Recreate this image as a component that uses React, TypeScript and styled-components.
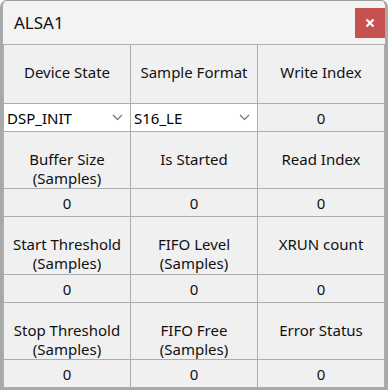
import React from "react";
import styled, { createGlobalStyle } from "styled-components";

const Global = createGlobalStyle`
  html, body { margin: 0; padding: 0; background: #ffffff; }
  body { font-family: "Noto Sans", "Liberation Sans", sans-serif; }
  * { box-sizing: border-box; }
`;

const Window = styled.div`
  width: 388px;
  height: 390px;
  background: #f0f0f0;
  border-top: 1px solid #9a9a9a;
  border-left: 3px solid #a9a9a9;
  border-right: 3px solid #a9a9a9;
  border-bottom: 2px solid #a9a9a9;
  border-radius: 7px 7px 0 0;
  display: flex;
  flex-direction: column;
  overflow: hidden;
`;

const TitleBar = styled.div`
  height: 43px;
  background: #f3f3f3;
  display: flex;
  align-items: center;
  justify-content: space-between;
  padding: 0 0 0 11px;
`;

const Title = styled.span`
  font-size: 17px;
  color: #111;
  padding-bottom: 1px;
`;

const CloseButton = styled.div`
  width: 30px;
  height: 30px;
  margin-top: 1px;
  background: #c75050;
  display: flex;
  align-items: center;
  justify-content: center;
`;

const Grid = styled.div`
  display: grid;
  grid-template-columns: 126px 126px 126px;
  grid-template-rows: 58px 27px 56px 27px 57px 27px 56px 27px;
  gap: 1px;
  padding: 1px;
  background: #adadad;
`;

const LabelCell = styled.div`
  background: #f0f0f0;
  display: flex;
  flex-direction: column;
  align-items: center;
  padding-top: 18px;
  font-size: 15px;
  line-height: 19px;
  color: #101010;
  text-align: center;
`;

const ValueCell = styled.div`
  background: #f0f0f0;
  display: flex;
  align-items: center;
  justify-content: center;
  font-size: 15px;
  color: #101010;
`;

const Combo = styled.div`
  background: #ffffff;
  display: flex;
  align-items: center;
  justify-content: space-between;
  padding: 0 7px 0 3px;
  font-size: 15px;
  color: #000;
`;

const Chevron = () => (
  <svg width="11" height="7" viewBox="0 0 11 7">
    <path d="M1 1 L5.5 5.5 L10 1" fill="none" stroke="#707070" strokeWidth="1.1" />
  </svg>
);

const CloseIcon = () => (
  <svg width="10" height="10" viewBox="0 0 10 10">
    <path d="M1.5 1.5 L8.5 8.5 M8.5 1.5 L1.5 8.5" stroke="#ffffff" strokeWidth="2.2" />
  </svg>
);

type Row = { labels: string[][]; values: (string | { combo: string })[] };

const rows: Row[] = [
  {
    labels: [["Device State"], ["Sample Format"], ["Write Index"]],
    values: [{ combo: "DSP_INIT" }, { combo: "S16_LE" }, "0"],
  },
  {
    labels: [["Buffer Size", "(Samples)"], ["Is Started"], ["Read Index"]],
    values: ["0", "0", "0"],
  },
  {
    labels: [["Start Threshold", "(Samples)"], ["FIFO Level", "(Samples)"], ["XRUN count"]],
    values: ["0", "0", "0"],
  },
  {
    labels: [["Stop Threshold", "(Samples)"], ["FIFO Free", "(Samples)"], ["Error Status"]],
    values: ["0", "0", "0"],
  },
];

export default function App() {
  return (
    <>
      <Global />
      <Window>
        <TitleBar>
          <Title>ALSA1</Title>
          <CloseButton>
            <CloseIcon />
          </CloseButton>
        </TitleBar>
        <Grid>
          {rows.map((row, ri) => (
            <React.Fragment key={ri}>
              {row.labels.map((lines, ci) => (
                <LabelCell key={"l" + ci}>
                  {lines.map((t, li) => (
                    <span key={li}>{t}</span>
                  ))}
                </LabelCell>
              ))}
              {row.values.map((v, ci) =>
                typeof v === "string" ? (
                  <ValueCell key={"v" + ci}>{v}</ValueCell>
                ) : (
                  <Combo key={"v" + ci}>
                    <span>{v.combo}</span>
                    <Chevron />
                  </Combo>
                )
              )}
            </React.Fragment>
          ))}
        </Grid>
      </Window>
    </>
  );
}
